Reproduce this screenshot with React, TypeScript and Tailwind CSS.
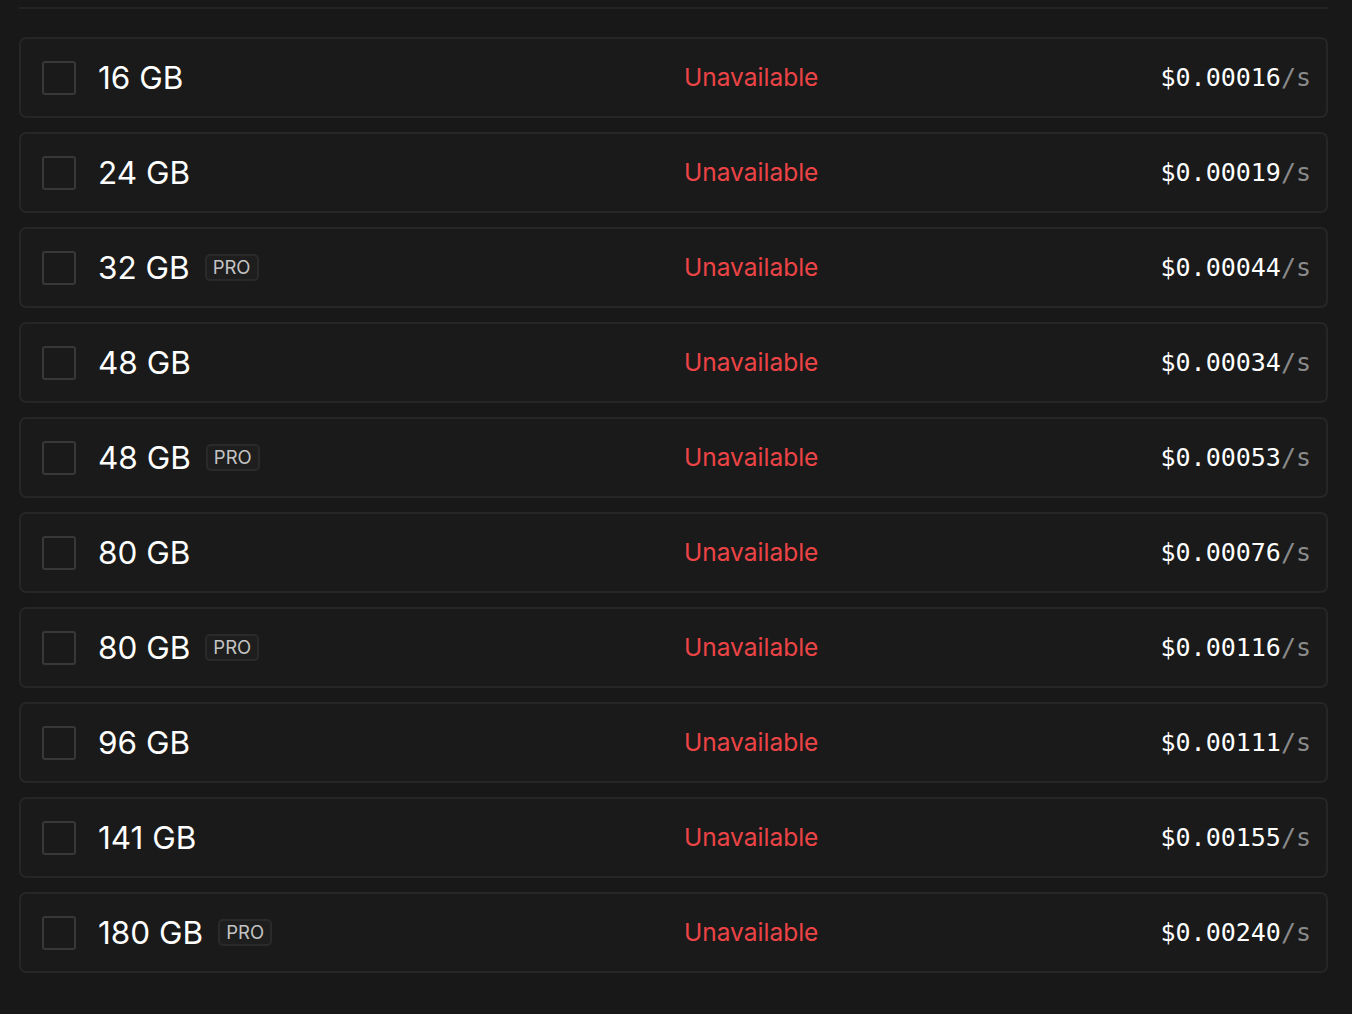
import React from 'react';

const rows = [
    { size: '16 GB', pro: false, price: '0.00016' },
    { size: '24 GB', pro: false, price: '0.00019' },
    { size: '32 GB', pro: true, price: '0.00044' },
    { size: '48 GB', pro: false, price: '0.00034' },
    { size: '48 GB', pro: true, price: '0.00053' },
    { size: '80 GB', pro: false, price: '0.00076' },
    { size: '80 GB', pro: true, price: '0.00116' },
    { size: '96 GB', pro: false, price: '0.00111' },
    { size: '141 GB', pro: false, price: '0.00155' },
    { size: '180 GB', pro: true, price: '0.00240' },
];

export default function App() {
    return (
        <div className="min-h-[1014px] w-full bg-[#181818] px-[19px] pt-[7px] font-['Inter','Noto_Sans',sans-serif]">
            <div className="h-[2px] w-[1309px] bg-[#242424]" />
            <div className="mt-[28px] flex w-[1309px] flex-col gap-[14px]">
                {rows.map((r, i) => (
                    <div
                        key={i}
                        className="grid h-[81px] grid-cols-[642px_1fr_auto] items-center rounded-[7px] border-2 border-[#262626] bg-[#1a1a1a] pl-[21px] pr-[15px]"
                    >
                        <div className="flex items-center">
                            <div className="h-[34px] w-[34px] rounded-[3px] border-2 border-[#383838]" />
                            <span className="ml-[22px] text-[31.5px] leading-none text-white">{r.size}</span>
                            {r.pro && (
                                <span className="ml-[15px] rounded-[5px] border-2 border-[#2a2a2a] bg-[#1e1e1e] px-[6px] py-[1px] text-[18.5px] leading-[21px] text-[#c4c4c4]">
                                    PRO
                                </span>
                            )}
                        </div>
                        <span className="text-[24.5px] leading-none text-[#ec4446]">Unavailable</span>
                        <span className="font-['DejaVu_Sans_Mono',monospace] text-[25px] leading-none text-white">
                            ${r.price}
                            <span className="text-[#8a8a8a]">/s</span>
                        </span>
                    </div>
                ))}
            </div>
        </div>
    );
}
